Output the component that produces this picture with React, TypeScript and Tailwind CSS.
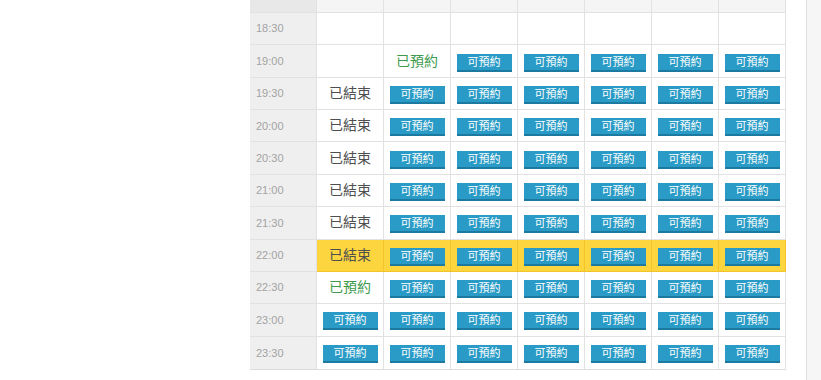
import React from "react";

type Cell = "empty" | "btn" | "ended" | "booked";

const times = ["18:30", "19:00", "19:30", "20:00", "20:30", "21:00", "21:30", "22:00", "22:30", "23:00", "23:30"];

function rowCells(t: string): Cell[] {
  const b5: Cell[] = Array(5).fill("btn");
  const b6: Cell[] = Array(6).fill("btn");
  switch (t) {
    case "18:30":
      return Array(7).fill("empty");
    case "19:00":
      return ["empty", "booked", ...b5];
    case "22:30":
      return ["booked", ...b6];
    case "23:00":
    case "23:30":
      return ["btn", ...b6];
    default:
      return ["ended", ...b6];
  }
}

const font = { fontFamily: '"Liberation Sans", "Noto Sans CJK TC", sans-serif' };

function Btn() {
  return (
    <div className="mt-[3px] w-[55px] h-[18px] bg-[#2a9bc6] border-b-2 border-[#1c7aa0] text-white text-[11px] leading-[16px] text-center">
      可預約
    </div>
  );
}

export default function App() {
  return (
    <div className="flex w-[821px] h-[380px] bg-white overflow-hidden" style={font}>
      <div className="w-[250px] shrink-0" />
      <div className="w-[536px] shrink-0 grid grid-cols-[repeat(8,67px)] grid-rows-[13px_repeat(11,32.36px)] border-b border-[#dcdcdc] self-start">
        <div className="bg-[#e8e8e8] border-r border-b border-[#e2e2e2]" />
        {Array.from({ length: 7 }).map((_, i) => (
          <div key={i} className="bg-[#f5f5f5] border-r border-b border-[#e2e2e2]" />
        ))}
        {times.map((t) => {
          const hl = t === "22:00";
          const last = t === "23:30";
          return (
            <React.Fragment key={t}>
              <div className={`bg-[#efefef] border-r border-[#e2e2e2] ${last ? "" : "border-b"} flex items-center pl-[6px] text-[11px] text-[#a3a3a3]`}>
                {t}
              </div>
              {rowCells(t).map((c, i) => (
                <div
                  key={i}
                  className={`${hl ? "bg-[#fcd53f] border-[#f3c52a]" : "bg-white border-[#e2e2e2]"} border-r ${last ? "" : "border-b"} flex items-center justify-center`}
                >
                  {c === "btn" && <Btn />}
                  {c === "ended" && <span className="text-[14px] text-[#4f4f4f]">已結束</span>}
                  {c === "booked" && <span className="text-[14px] text-[#3d9a4d]">已預約</span>}
                </div>
              ))}
            </React.Fragment>
          );
        })}
      </div>
      <div className="w-[20px] shrink-0" />
      <div className="flex-1 border-l border-[#dedede] bg-[#f6f6f6]" />
    </div>
  );
}
